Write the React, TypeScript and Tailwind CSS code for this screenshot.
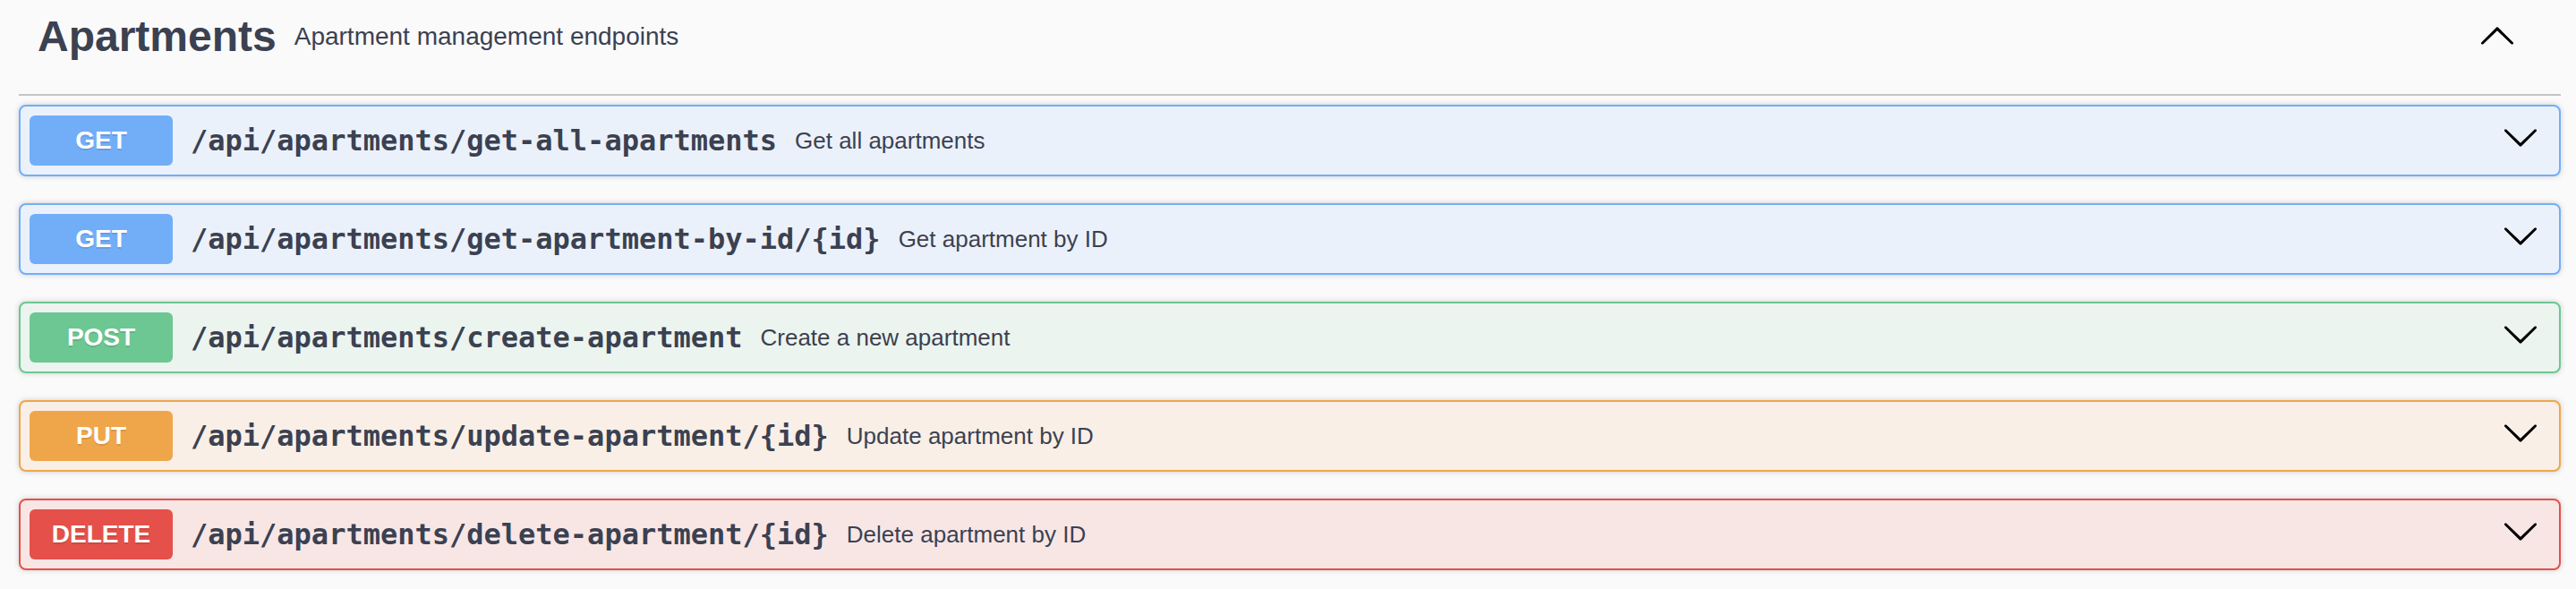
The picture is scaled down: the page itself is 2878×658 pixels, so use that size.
import clsx from 'clsx';

type Method = 'GET' | 'POST' | 'PUT' | 'DELETE';

interface Endpoint {
  method: Method;
  path: string;
  summary: string;
}

const endpoints: Endpoint[] = [
  { method: 'GET', path: '/api/apartments/get-all-apartments', summary: 'Get all apartments' },
  { method: 'GET', path: '/api/apartments/get-apartment-by-id/{id}', summary: 'Get apartment by ID' },
  { method: 'POST', path: '/api/apartments/create-apartment', summary: 'Create a new apartment' },
  { method: 'PUT', path: '/api/apartments/update-apartment/{id}', summary: 'Update apartment by ID' },
  { method: 'DELETE', path: '/api/apartments/delete-apartment/{id}', summary: 'Delete apartment by ID' },
];

// colours per HTTP verb (block border/background + badge)
const methodStyles: Record<Method, { block: string; badge: string }> = {
  GET: { block: 'border-[#72aef8] bg-[#ebf1fa]', badge: 'bg-[#72aef8]' },
  POST: { block: 'border-[#6cc792] bg-[#ebf4ef]', badge: 'bg-[#6cc792]' },
  PUT: { block: 'border-[#efa64b] bg-[#f9efe6]', badge: 'bg-[#efa64b]' },
  DELETE: { block: 'border-[#e5504a] bg-[#f8e6e5]', badge: 'bg-[#e5504a]' },
};

function Arrow({ up = false, className }: { up?: boolean; className?: string }) {
  return (
    <svg width={42} height={42} viewBox="0 0 20 20" fill="#000" className={clsx(up && 'rotate-180', className)}>
      <path d="M17.418 6.109c.272-.268.709-.268.979 0s.271.701 0 .969l-7.908 7.83c-.27.268-.707.268-.979 0l-7.908-7.83c-.27-.268-.27-.701 0-.969.271-.268.709-.268.979 0L10 13.25l7.418-7.141z" />
    </svg>
  );
}

function OperationBlock({ endpoint }: { endpoint: Endpoint }) {
  const styles = methodStyles[endpoint.method];

  return (
    <div
      className={clsx(
        'mb-[30px] flex h-[80px] items-center rounded-[8px] border-2 p-[10px] pr-[22px] shadow-[0_0_6px_rgba(0,0,0,0.19)] last:mb-0',
        styles.block
      )}
    >
      <span
        className={clsx(
          'flex h-[56px] w-[160px] shrink-0 items-center justify-center rounded-[6px] text-[28px] font-bold text-white [text-shadow:0_2px_0_rgba(0,0,0,0.1)]',
          styles.badge
        )}
      >
        {endpoint.method}
      </span>
      <span className="px-[20px] font-['DejaVu_Sans_Mono',monospace] text-[32px] font-bold text-[#3b4151]">
        {endpoint.path}
      </span>
      <span className="text-[26px] text-[#3b4151]">{endpoint.summary}</span>
      <Arrow className="mb-[8px] ml-auto shrink-0" />
    </div>
  );
}

export default function App() {
  return (
    <div className="min-h-[658px] w-full bg-[#fafafa] font-['Liberation_Sans',Arial,sans-serif] text-[#3b4151]">
      <div className="ml-[21px] mr-[17px]">
        <div className="mb-[10px] flex h-[107px] items-center border-b-2 border-[#c3c4c8] pb-[23px] pl-[21px] pr-[50px]">
          <span className="text-[48px] font-bold leading-none">Apartments</span>
          <span className="pl-[20px] text-[28px] leading-none">Apartment management endpoints</span>
          <Arrow up className="ml-auto" />
        </div>

        <div>
          {endpoints.map((endpoint) => (
            <OperationBlock key={endpoint.method + endpoint.path} endpoint={endpoint} />
          ))}
        </div>
      </div>
    </div>
  );
}
